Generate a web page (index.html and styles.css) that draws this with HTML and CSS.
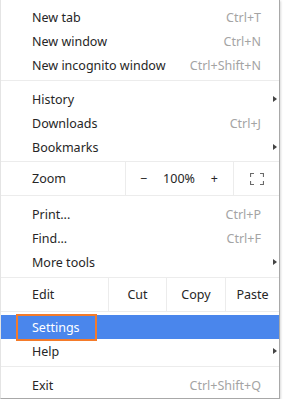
FILE: index.html
```html
<!DOCTYPE html>
<html lang="en">
<head>
    <meta charset="UTF-8">
    <title>Menu</title>
    <link rel="stylesheet" href="styles.css">
</head>
<body>
    <div class="menu">
        <div class="item"><span class="label">New tab</span><span class="key">Ctrl+T</span></div>
        <div class="item"><span class="label">New window</span><span class="key">Ctrl+N</span></div>
        <div class="item"><span class="label">New incognito window</span><span class="key">Ctrl+Shift+N</span></div>
        <div class="sep"></div>

        <div class="item"><span class="label">History</span><span class="arrow"></span></div>
        <div class="item"><span class="label">Downloads</span><span class="key">Ctrl+J</span></div>
        <div class="item"><span class="label">Bookmarks</span><span class="arrow"></span></div>

        <div class="row zoom-row">
            <span class="row-label zoom-label">Zoom</span>
            <div class="cell zoom-ctrl">
                <span>&minus;</span>
                <span>100%</span>
                <span>+</span>
            </div>
            <div class="cell fullscreen">
                <svg width="14" height="12" viewBox="0 0 14 12">
                    <path d="M0.5 4V0.5H4M10 0.5H13.5V4M13.5 8V11.5H10M4 11.5H0.5V8" fill="none" stroke="#6a6a6a" stroke-width="1.2"/>
                </svg>
            </div>
        </div>

        <div class="item"><span class="label">Print...</span><span class="key">Ctrl+P</span></div>
        <div class="item"><span class="label">Find...</span><span class="key">Ctrl+F</span></div>
        <div class="item"><span class="label">More tools</span><span class="arrow"></span></div>

        <div class="row edit-row">
            <span class="row-label edit-label">Edit</span>
            <div class="cell cut">Cut</div>
            <div class="cell copy">Copy</div>
            <div class="cell paste">Paste</div>
        </div>

        <div class="item active">
            <span class="label">Settings</span>
            <span class="highlight-box"></span>
        </div>
        <div class="item"><span class="label">Help</span><span class="arrow"></span></div>
        <div class="sep"></div>
        <div class="item"><span class="label">Exit</span><span class="key">Ctrl+Shift+Q</span></div>
    </div>
</body>
</html>
```

FILE: styles.css
```css
body {
    margin: 0;
    background-color: #fff;
    font-family: "Noto Sans", "Open Sans", sans-serif;
    font-size: 12.5px;
    color: #262626;
}
.menu {
    width: 278px;
    margin-left: 0;
    padding: 5px 0 1px 0;
    background-color: #fff;
    border-left: 1px solid #e4e4e4;
    border-right: 1px solid #a8a8a8;
    border-bottom: 1px solid #a8a8a8;
    box-shadow: 1px 1px 2px rgba(0, 0, 0, 0.15);
}
.item {
    position: relative;
    display: grid;
    grid-template-columns: 31px 1fr auto 18px;
    align-items: center;
    height: 24px;
}
.item .label {
    grid-column: 2;
}
.item .key {
    grid-column: 3;
    color: #a4a4a4;
}
.item .arrow {
    grid-column: 4;
    justify-self: end;
    margin-right: 2px;
    width: 0;
    height: 0;
    border-top: 3px solid transparent;
    border-bottom: 3px solid transparent;
    border-left: 4px solid #444;
}
.sep {
    height: 1px;
    margin: 3px 0 6px 0;
    background-color: #ececec;
}
.row {
    display: flex;
    align-items: stretch;
    height: 33px;
    border-top: 1px solid #ececec;
    border-bottom: 1px solid #ececec;
}
.zoom-row {
    margin-top: 2px;
    margin-bottom: 6px;
}
.edit-row {
    margin-top: 3px;
    margin-bottom: 3px;
}
.row-label {
    display: flex;
    align-items: center;
    padding-left: 31px;
    box-sizing: border-box;
}
.zoom-label {
    width: 124px;
}
.edit-label {
    width: 107px;
}
.cell {
    display: flex;
    align-items: center;
    justify-content: center;
    border-left: 1px solid #ececec;
}
.zoom-ctrl {
    width: 108px;
    justify-content: space-between;
    padding: 0 15px 0 14px;
    box-sizing: border-box;
}
.fullscreen {
    flex: 1;
}
.cut {
    width: 57px;
}
.copy {
    width: 58px;
}
.paste {
    flex: 1;
}
.item.active {
    background-color: #4a86ec;
    color: #fff;
}
.highlight-box {
    position: absolute;
    left: 15px;
    top: -1px;
    width: 81px;
    height: 27px;
    border: 2px solid #f47b2a;
    box-sizing: border-box;
}
```
